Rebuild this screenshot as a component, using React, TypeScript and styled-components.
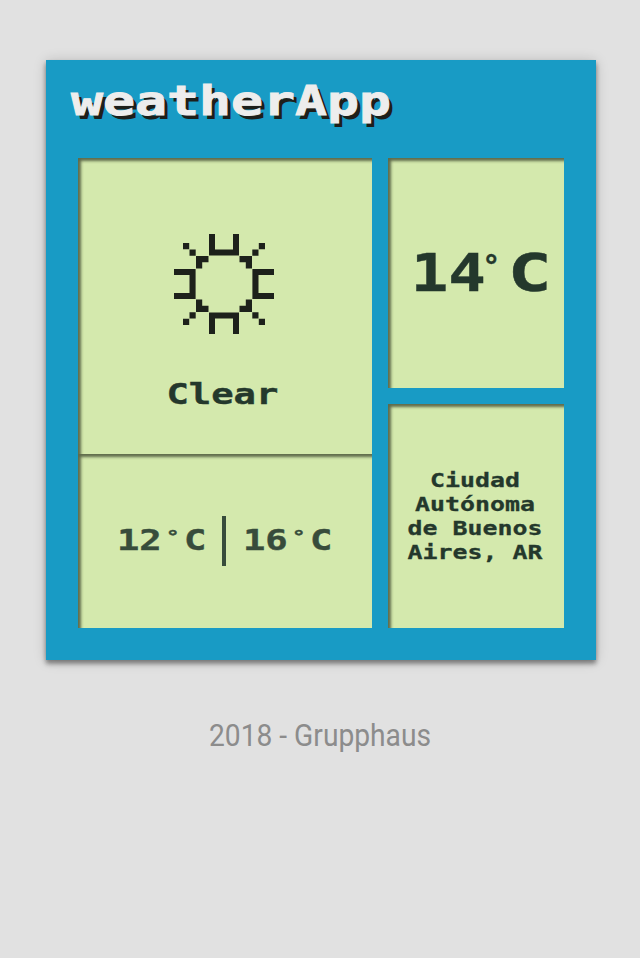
import React from "react";
import styled, { createGlobalStyle } from "styled-components";

const GlobalStyle = createGlobalStyle`
  * { box-sizing: border-box; }
  body { margin: 0; background: #e1e1e1; }
`;

const Page = styled.div`
  min-height: 958px;
  padding: 60px 44px 0 46px;
  background: #e1e1e1;
  font-family: "DejaVu Sans Mono", monospace;
  font-weight: 700;
  color: #24382c;
`;

const Card = styled.main`
  display: flex;
  flex-direction: column;
  width: 550px;
  height: 600px;
  padding: 0 32px 32px;
  background: #189bc5;
  box-shadow: 0 4px 5px rgba(0, 0, 0, 0.24), 0 1px 12px rgba(0, 0, 0, 0.18), 0 3px 4px rgba(0, 0, 0, 0.22);
`;

const Title = styled.h1`
  height: 98px;
  width: 260px;
  margin: 0 0 0 -7px;
  padding-top: 17px;
  font-size: 41px;
  line-height: 48px;
  color: #ededed;
  -webkit-text-stroke: 0.9px #ededed;
  text-shadow: 3px 4px 0 #1d1f1b;
  transform: scaleX(1.296);
  transform-origin: left;
`;

const Panels = styled.div`
  display: grid;
  grid-template-columns: 294px 176px;
  column-gap: 16px;
  height: 470px;
`;

const Column = styled.div<{ $rows: string; $gap?: number }>`
  display: grid;
  grid-template-rows: ${(p) => p.$rows};
  row-gap: ${(p) => p.$gap ?? 0}px;
`;

const Screen = styled.section<{ $direction?: "row" | "column" }>`
  display: flex;
  flex-direction: ${(p) => p.$direction ?? "row"};
  align-items: center;
  justify-content: center;
  background: #d4e9ad;
  box-shadow: inset 3px 3px 3px #5f6b4b;
  overflow: hidden;
`;

const SkyScreen = styled(Screen)`
  justify-content: flex-start;
  padding-top: 76px;
  padding-right: 2px;
`;

const PixelText = styled.span<{ $size: number; $stretch?: number }>`
  font-size: ${(p) => p.$size}px;
  line-height: 1.25;
  white-space: pre;
  -webkit-text-stroke: 0.4px currentColor;
  transform: scaleX(${(p) => p.$stretch ?? 1.29});
`;

const Condition = styled(PixelText)`
  margin: 43px 3px 0 0;
`;

const Range = styled.div`
  display: flex;
  align-items: center;
  margin-right: 1px;
  color: #374c3b;
`;

const Divider = styled.i`
  width: 4px;
  height: 50px;
  margin: 0 27px 0 25px;
  background: #374c3b;
`;

const SmallDegree = styled.span`
  display: inline-block;
  width: 17.3px;
  font-size: 18px;
  line-height: 18px;
  text-align: center;
  vertical-align: 7px;
`;

const Current = styled.div`
  display: flex;
  align-items: center;
  padding-left: 11px;
`;

const Digits = styled(PixelText)`
  width: 63px;
`;

const Degree = styled(PixelText)`
  width: 18px;
  margin: -13px 14px 0 2px;
`;

const Place = styled.p`
  margin: 2px 2px 0 0;
  font-size: 19.2px;
  line-height: 24px;
  text-align: center;
  white-space: pre;
  -webkit-text-stroke: 0.3px currentColor;
  transform: scaleX(1.297);
`;

const Footer = styled.footer`
  margin: 56px 2px 0 0;
  font: 400 32px/38px Roboto, sans-serif;
  text-align: center;
  color: #8c8c8c;
  transform: scaleX(0.881);
`;

const Sun = () => (
  <svg width="100" height="100" viewBox="0 0 100 100" fill="#1d211b" aria-hidden="true">
    {[0, 90, 180, 270].map((angle) => (
      <path
        key={angle}
        transform={`rotate(${angle} 50 50)`}
        d="M35 0h6v15.5h18V0h6v21.6H35z"
      />
    ))}
    {["1 1", "-1 1", "1 -1", "-1 -1"].map((flip) => (
      <path
        key={flip}
        transform={`translate(50 50) scale(${flip}) translate(-50 -50)`}
        d="M9 9h6.2v6.2H9zM15.5 15.5h6.2v6.2h-6.2zM22 22h12.5v6.2h-6.3v6.3H22z"
      />
    ))}
  </svg>
);

const Temperature = ({ value }: { value: number }) => (
  <PixelText $size={28.8}>
    {value}
    <SmallDegree>°</SmallDegree>C
  </PixelText>
);

export default function App() {
  return (
    <>
      <GlobalStyle />
      <Page>
        <Card>
          <Title>weatherApp</Title>
          <Panels>
            <Column $rows="296px 174px">
              <SkyScreen $direction="column">
                <Sun />
                <Condition $size={28.8}>Clear</Condition>
              </SkyScreen>
              <Screen>
                <Range>
                  <Temperature value={12} />
                  <Divider />
                  <Temperature value={16} />
                </Range>
              </Screen>
            </Column>
            <Column $rows="230px 224px" $gap={16}>
              <Screen>
                <Current>
                  <Digits $size={52} $stretch={1.2}>14</Digits>
                  <Degree $size={30} $stretch={1}>°</Degree>
                  <PixelText $size={52} $stretch={1.4}>C</PixelText>
                </Current>
              </Screen>
              <Screen>
                <Place>{"Ciudad\nAutónoma\nde Buenos\nAires, AR"}</Place>
              </Screen>
            </Column>
          </Panels>
        </Card>
        <Footer>2018 - Grupphaus</Footer>
      </Page>
    </>
  );
}
